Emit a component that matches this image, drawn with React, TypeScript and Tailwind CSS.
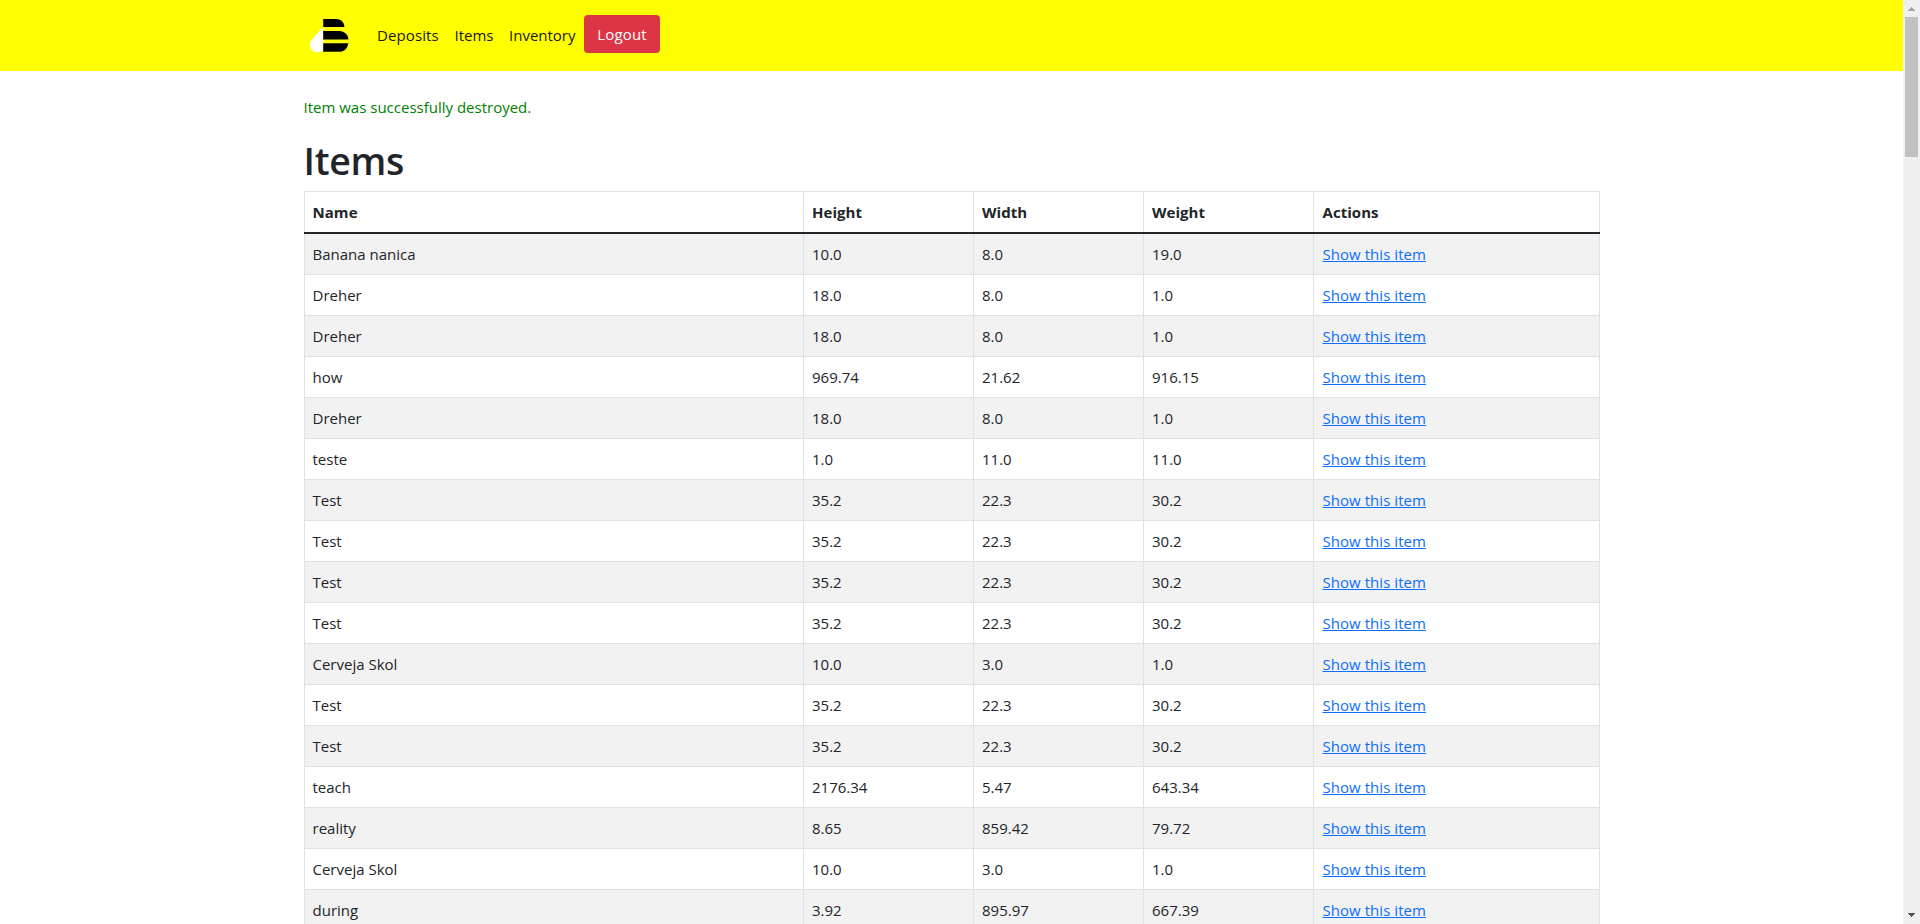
type Item = [name: string, height: string, width: string, weight: string];

const items: Item[] = [
  ["Banana nanica", "10.0", "8.0", "19.0"],
  ["Dreher", "18.0", "8.0", "1.0"],
  ["Dreher", "18.0", "8.0", "1.0"],
  ["how", "969.74", "21.62", "916.15"],
  ["Dreher", "18.0", "8.0", "1.0"],
  ["teste", "1.0", "11.0", "11.0"],
  ["Test", "35.2", "22.3", "30.2"],
  ["Test", "35.2", "22.3", "30.2"],
  ["Test", "35.2", "22.3", "30.2"],
  ["Test", "35.2", "22.3", "30.2"],
  ["Cerveja Skol", "10.0", "3.0", "1.0"],
  ["Test", "35.2", "22.3", "30.2"],
  ["Test", "35.2", "22.3", "30.2"],
  ["teach", "2176.34", "5.47", "643.34"],
  ["reality", "8.65", "859.42", "79.72"],
  ["Cerveja Skol", "10.0", "3.0", "1.0"],
  ["during", "3.92", "895.97", "667.39"],
];

const columns = "grid grid-cols-[499px_170px_170px_170px_287px]";
const cell = "border-l border-[#dee2e6] pl-2 text-left first:pl-[7.5px] last:border-r last:pl-[8.5px]";

function Logo() {
  return (
    <svg width="40" height="36" viewBox="0 0 40 36" aria-hidden="true">
      <path d="M14.5 9.5V32.5a7.3 7.3 0 1 1-12-9.5z" fill="#fff" />
      <path d="M14.2 2h13.2c4.3 0 8 3.4 8 8H14.2z" fill="#000" />
      <path d="M14.2 14h16.3c4.6 0 8.9 3.8 8.9 8.5H14.2z" fill="#000" />
      <path d="M14.2 26.2h25.1c-.6 5-4.3 8.5-8.8 8.5H14.2z" fill="#000" />
    </svg>
  );
}

function Navbar() {
  return (
    <header className="h-[71px] bg-[#ffff00] pl-[309px]">
      <nav className="flex pt-[15px]">
        <div className="pt-[2px]">
          <Logo />
        </div>
        <div className="ml-7 flex pt-2 leading-6 text-[#191900]">
          <a href="#" className="w-[77.5px] tracking-[0.1px]">Deposits</a>
          <a href="#" className="w-[54.5px]">Items</a>
          <a href="#" className="w-[75px]">Inventory</a>
        </div>
        <button className="h-[38px] w-[76px] rounded bg-[#dc3545] tracking-[0.15px] text-white">Logout</button>
      </nav>
    </header>
  );
}

function Scrollbar() {
  return (
    <div className="flex w-[17px] flex-col items-center justify-between bg-[#f0f0f0]">
      <div className="flex flex-col items-center">
        <svg width="17" height="17" shapeRendering="crispEdges">
          <path d="M8 7h1v1h1v1h1v1h1v1H5v-1h1V9h1V8h1z" fill="#a3a3a3" />
        </svg>
        <div className="h-[140px] w-[13px] bg-[#c1c1c1]" />
      </div>
      <svg width="17" height="17" shapeRendering="crispEdges">
        <path d="M5 6h7v1h-1v1h-1v1H9v1H8V9H7V8H6V7H5z" fill="#505050" />
      </svg>
    </div>
  );
}

export default function App() {
  return (
    <div className="flex h-[924px] w-[1920px] overflow-hidden bg-white font-['Open_Sans','Noto_Sans',sans-serif] text-[15px] text-[#212529]">
      <div className="min-w-0 flex-1">
        <Navbar />
        <main className="ml-[304px] w-[1296px]">
          <p className="-ml-[0.5px] pt-6 leading-6 text-[#008000]">Item was successfully destroyed.</p>
          <h1 className="mt-[18px] mb-1.5 -ml-[0.5px] text-[37.5px] leading-12 font-semibold tracking-[-0.3px]">Items</h1>
          <table className="block">
            <thead className="block">
              <tr className={`${columns} h-[43px] border-t border-b-2 border-t-[#dee2e6] border-b-[#212529] leading-10`}>
                {["Name", "Height", "Width", "Weight", "Actions"].map((title) => (
                  <th key={title} className={`${cell} font-bold tracking-[0.05px]`}>
                    {title}
                  </th>
                ))}
              </tr>
            </thead>
            <tbody className="block">
              {items.map((item, i) => (
                <tr key={i} className={`${columns} h-[41px] border-b border-[#dee2e6] leading-10 odd:bg-[#f2f2f2]`}>
                  {item.map((value, j) => (
                    <td key={j} className={cell}>
                      {value}
                    </td>
                  ))}
                  <td className={cell}>
                    <a href="#" className="tracking-[0.05px] text-[#0d6efd] underline">
                      Show this item
                    </a>
                  </td>
                </tr>
              ))}
            </tbody>
          </table>
        </main>
      </div>
      <Scrollbar />
    </div>
  );
}
